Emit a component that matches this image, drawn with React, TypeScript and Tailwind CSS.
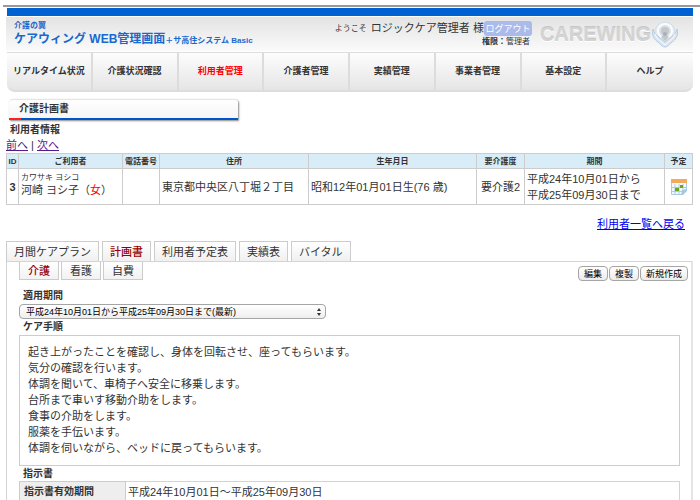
import React, { useState } from "react";

const navItems = [
  "リアルタイム状況",
  "介護状況確認",
  "利用者管理",
  "介護者管理",
  "実績管理",
  "事業者管理",
  "基本設定",
  "ヘルプ",
];

const mainTabs = ["月間ケアプラン", "計画書", "利用者予定表", "実績表", "バイタル"];
const subTabs = ["介護", "看護", "自費"];
const actions = ["編集", "複製", "新規作成"];

const careSteps = [
  "起き上がったことを確認し、身体を回転させ、座ってもらいます。",
  "気分の確認を行います。",
  "体調を聞いて、車椅子へ安全に移乗します。",
  "台所まで車いす移動介助をします。",
  "食事の介助をします。",
  "服薬を手伝います。",
  "体調を伺いながら、ベッドに戻ってもらいます。",
];

function WingMark() {
  return (
    <svg className="h-7 w-7" viewBox="0 0 28 28" fill="none" aria-hidden="true">
      <circle cx="14" cy="12" r="10" fill="#e6e9ed" stroke="#cfe0f0" />
      <circle cx="14" cy="11" r="7" fill="#dcdfe3" stroke="#fafcfe" strokeWidth="2" />
      <path
        d="M2 9c-2 7 2 11 5 13 3 3 5 5 7 5s4-2 7-5c3-2 7-6 5-13-1 4-3 6-6 8l-6 5-6-5c-3-2-5-4-6-8z"
        fill="#dce5ef"
        stroke="#b5cce3"
      />
      <path d="M4 14c1 4 4 6 10 11 6-5 9-7 10-11" stroke="#f8fbfe" />
      <circle cx="14" cy="11" r="4" fill="#c3c8ce" />
      <path d="M10 17l4-3 4 3-4 4z" fill="#c3c8ce" />
      <circle cx="14" cy="14" r="2" fill="#a9b0b8" />
    </svg>
  );
}

function CalendarIcon() {
  return (
    <svg className="block h-4 w-4" viewBox="0 0 16 16" aria-hidden="true">
      <path d="M0 1h16v11l-4 4H0z" fill="#f4f9fd" />
      <path d="M.5 4v11.500h11M4 5v10M8 5v10M12 5v6M0 8.500h16M0 12.500h12M15.500 4v8" stroke="#a9cbe4" fill="none" />
      <path d="M0 0h16v4H0z" fill="#f5a95a" />
      <path d="M9 6h3v3H9zM4 9h4v3H4z" fill="#6aa61c" />
      <path d="M10 16l1-5 5-1v2l-4 4z" fill="#a9c7e2" />
    </svg>
  );
}

// 上部の青いバー、タイトル、ログイン情報
function Header() {
  return (
    <header>
      <div className="ml-px h-2 bg-[#0062d2]" />
      <div className="mt-px flex h-[34px] justify-between bg-linear-to-b from-[#e3e3e3] to-[#fafafa] pl-2">
        <div className="pt-1 font-bold text-[#1769cf]">
          <p className="text-[8px] leading-[10px]">介護の翼</p>
          <h1 className="flex items-baseline text-xs leading-4">
            ケアウィング WEB管理画面
            <span className="text-[8px]">＋サ高住システム Basic</span>
          </h1>
        </div>
        <div className="flex">
          <div className="pt-1 text-right">
            <div className="flex items-center">
              <span className="mr-1 text-[8px]">ようこそ</span>
              <span className="text-[11px] leading-[15px]">ロジックケア管理者 様</span>
              <button className="h-[15px] w-12 rounded-[3px] bg-[#a9baeb] text-[9px] leading-[14px] text-white">
                ログアウト
              </button>
            </div>
            <p className="pr-0.5 text-[8px] leading-[12px]">
              <b>権限：</b>管理者
            </p>
          </div>
          <div className="ml-2 mr-[14px] flex items-center">
            <span className="text-[20px] font-bold text-[#d3d3d3] text-shadow-[0_1px_0_#ffffff,0_-1px_0_#c6c6c6]">
              CAREWING
            </span>
            <WingMark />
          </div>
        </div>
      </div>
    </header>
  );
}

function MainNav() {
  return (
    <nav className="ml-px mt-px grid h-10 grid-cols-8 overflow-hidden rounded-b-lg border-t border-b-2 border-[#dddddd] bg-linear-to-b from-[#fdfdfd] to-[#e5e5e5]">
      {navItems.map((item) => (
        <a
          key={item}
          href="#"
          className={`flex items-center justify-center border-r-2 border-[#dcdcdc] text-[9px] font-bold last:border-r-0 ${
            item === "利用者管理" ? "text-[#ff0000]" : "text-[#333333]"
          }`}
        >
          {item}
        </a>
      ))}
    </nav>
  );
}

function UserTable() {
  const head = "border border-[#cccccc] p-0 text-center text-[8px] font-bold";
  const cell = "border border-[#cccccc] px-0.5 py-0";

  return (
    <table className="w-full table-fixed border-collapse whitespace-nowrap text-[11px] leading-4">
      <colgroup>
        <col className="w-3" />
        <col className="w-[104px]" />
        <col className="w-[37px]" />
        <col className="w-[149px]" />
        <col className="w-[168px]" />
        <col className="w-12" />
        <col className="w-[140px]" />
        <col className="w-7" />
      </colgroup>
      <thead>
        <tr className="h-[15px] bg-[#d9edf8] leading-[13px]">
          <th className={head}>ID</th>
          <th className={head}>ご利用者</th>
          <th className={head}>電話番号</th>
          <th className={head}>住所</th>
          <th className={head}>生年月日</th>
          <th className={head}>要介護度</th>
          <th className={head}>期間</th>
          <th className={head}>予定</th>
        </tr>
      </thead>
      <tbody>
        <tr className="h-9">
          <td className="border border-[#cccccc] p-0 text-center font-bold">3</td>
          <td className="border border-[#cccccc] px-0.5 pb-0 pt-1 align-top">
            <div className="text-[8px] leading-[10px]">カワサキ ヨシコ</div>
            <div className="leading-[14px]">
              河崎 ヨシ子（<span className="text-[#ff0000]">女</span>）
            </div>
          </td>
          <td className={cell}></td>
          <td className={cell}>東京都中央区八丁堀２丁目</td>
          <td className={cell}>昭和12年01月01日生(76 歳)</td>
          <td className="border border-[#cccccc] p-0 text-center">要介護2</td>
          <td className={cell}>
            平成24年10月01日から
            <br />
            平成25年09月30日まで
          </td>
          <td className="border border-[#cccccc] p-0">
            <a href="#" aria-label="予定" className="flex justify-center">
              <CalendarIcon />
            </a>
          </td>
        </tr>
      </tbody>
    </table>
  );
}

export default function App() {
  const [tab, setTab] = useState("計画書");
  const [subTab, setSubTab] = useState("介護");

  return (
    <div className="bg-white pt-[5px] font-['Liberation_Sans','Noto_Sans_CJK_JP',sans-serif] text-[#333333]" lang="ja">
      <div className="ml-[3px] h-0.5 bg-[#999999]" />
      <div className="ml-1.5 mr-[7px] mt-px">
        <Header />
        <MainNav />

        <main>
          <h2 className="ml-[3px] mt-[7px] w-[229px] rounded-t-sm border-t border-[#e5e5e5] bg-linear-to-b from-white to-[#f5f5f5] text-[10px] font-bold leading-[18px] shadow-[1px_1px_2px_#888888]">
            <span className="block pl-2.5">介護計画書</span>
            <span className="flex h-0.5 bg-[#0055cc]">
              <span className="w-3 bg-[#ff2020]" />
            </span>
          </h2>

          <h3 className="ml-1 mt-[3px] text-[10px] font-bold leading-[14px]">利用者情報</h3>
          <div className="text-[11px] leading-4">
            <a href="#" className="text-[#551a8b] underline">前へ</a>
            {" | "}
            <a href="#" className="text-[#551a8b] underline">次へ</a>
          </div>

          <UserTable />

          <div className="mt-[11px] pr-2 text-right text-[11px] leading-4">
            <a href="#" className="text-[#0000ee] underline">利用者一覧へ戻る</a>
          </div>

          {/* タブ */}
          <div className="mt-[9px] flex gap-[3px]">
            {mainTabs.map((name) => (
              <button
                key={name}
                onClick={() => setTab(name)}
                className={`h-5 border border-b-0 border-[#cccccc] bg-linear-to-b from-white to-[#f0f0f0] px-[7px] text-[11px] leading-[18px] ${
                  name === tab ? "font-medium text-[#990000]" : ""
                }`}
              >
                {name}
              </button>
            ))}
          </div>

          <section className="border border-r-2 border-[#d4d4d4] border-r-[#e5e5e5] pl-3 pr-[3px]">
            <div className="flex justify-between">
              <div className="flex gap-0.5">
                {subTabs.map((name) => (
                  <button
                    key={name}
                    onClick={() => setSubTab(name)}
                    className={`h-[18px] border border-t-0 border-[#cccccc] bg-linear-to-b from-white to-[#f2f2f2] px-2 text-[11px] leading-4 ${
                      name === subTab ? "font-medium text-[#990000]" : ""
                    }`}
                  >
                    {name}
                  </button>
                ))}
              </div>
              <div className="flex gap-px pt-1">
                {actions.map((name) => (
                  <button
                    key={name}
                    className="h-[15px] rounded-[4px] border border-[#a5a5a5] bg-linear-to-b from-white to-[#ececec] px-[5px] text-[9px] leading-3 text-black"
                  >
                    {name}
                  </button>
                ))}
              </div>
            </div>

            <div className="pr-2">
              <label htmlFor="period" className="ml-1 mt-[7px] block text-[10px] font-bold leading-4">
                適用期間
              </label>
              <div className="relative w-[307px]">
                <select
                  id="period"
                  className="block h-[15px] w-full appearance-none rounded-[4px] border border-[#a5a5a5] bg-linear-to-b from-white to-[#eeeeee] px-1.5 text-[9px] leading-3 text-black"
                >
                  <option>平成24年10月01日から平成25年09月30日まで(最新)</option>
                </select>
                <svg className="pointer-events-none absolute right-1 top-1 h-2 w-1.5" viewBox="0 0 6 8" fill="#333333">
                  <path d="M3 0l2 3H1zM3 8L1 5h4z" />
                </svg>
              </div>

              <h3 className="ml-1 text-[10px] font-bold leading-4">ケア手順</h3>
              <div className="border border-[#cccccc] px-2 pb-[9px] pt-2 text-[11px] leading-4">
                {careSteps.map((step) => (
                  <p key={step}>{step}</p>
                ))}
              </div>

              <h3 className="ml-1 text-[10px] font-bold leading-[15px]">指示書</h3>
              <table className="w-full border-collapse text-left text-[11px] leading-4">
                <tbody>
                  <tr className="h-5">
                    <th className="w-[106px] border border-[#cccccc] bg-[#eeeeee] px-1 py-0 text-[10px] font-bold">
                      指示書有効期間
                    </th>
                    <td className="border border-[#d4d4d4] px-0.5 py-0">平成24年10月01日～平成25年09月30日</td>
                  </tr>
                </tbody>
              </table>
            </div>
          </section>
        </main>
      </div>
    </div>
  );
}
